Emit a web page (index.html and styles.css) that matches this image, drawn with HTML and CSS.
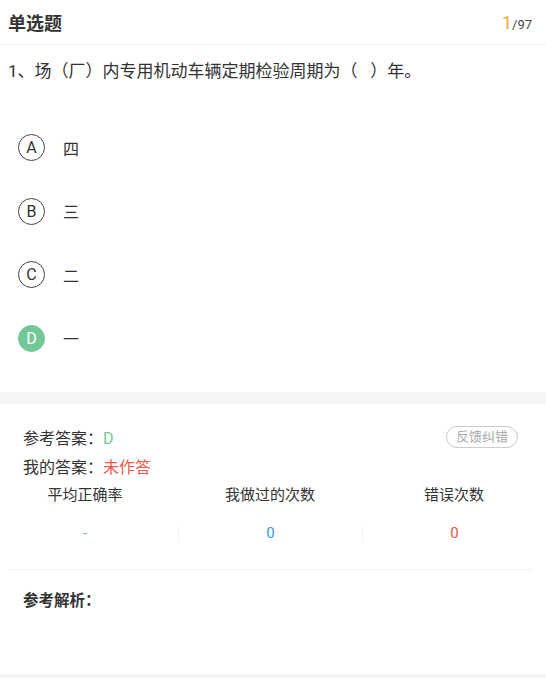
FILE: index.html
```html
<!DOCTYPE html>
<html>
<head>
  <title>单选题</title>
  <meta name="viewport" content="width=device-width, initial-scale=1.0">
  <link rel="stylesheet" href="styles.css">
</head>
<body>
  <div class='topbar'>
    <span class='topbar-title'>单选题</span>
    <span class='counter'><b>1</b>/97</span>
  </div>
  <div class='question'>1、场（厂）内专用机动车辆定期检验周期为（&nbsp;&nbsp;&nbsp;）年。</div>
  <ul class='options'>
    <li><span class='letter'>A</span><span>四</span></li>
    <li><span class='letter'>B</span><span>三</span></li>
    <li><span class='letter'>C</span><span>二</span></li>
    <li class='right'><span class='letter'>D</span><span>一</span></li>
  </ul>
  <div class='band'></div>
  <div class='answer'>
    <div class='answer-row'>
      <span>参考答案：<em class='ok'>D</em></span>
      <span class='feedback'>反馈纠错</span>
    </div>
    <div class='answer-row'>
      <span>我的答案：<em class='bad'>未作答</em></span>
    </div>
  </div>
  <div class='stats'>
    <div class='stat first'>
      <div class='stat-label'>平均正确率</div>
      <div class='stat-value teal'>-</div>
    </div>
    <div class='stat'>
      <div class='stat-label'>我做过的次数</div>
      <div class='stat-value blue'>0</div>
    </div>
    <div class='stat'>
      <div class='stat-label'>错误次数</div>
      <div class='stat-value red'>0</div>
    </div>
  </div>
  <div class='analysis'>参考解析：</div>
  <div class='band bottom'></div>
</body>
</html>
```

FILE: styles.css
```css
body {
  margin: 0;
  padding: 0;
  font-family: Roboto, "Noto Sans CJK SC", sans-serif;
  color: #333;
  background: #fff;
}
.topbar {
  display: flex;
  justify-content: space-between;
  align-items: center;
  height: 44px;
  padding: 0 14px 0 8px;
  border-bottom: 1px solid #f0f0f0;
}
.topbar-title {
  font-size: 18px;
  font-weight: bold;
}
.counter {
  font-size: 13px;
  color: #444;
}
.counter b {
  font-size: 18px;
  font-weight: normal;
  color: #f3a73b;
}
.question {
  font-size: 17px;
  line-height: 26px;
  padding: 13px 8px 0;
}
.options {
  list-style: none;
  margin: 32px 0 0;
  padding: 0 0 22px;
}
.options li {
  display: flex;
  align-items: center;
  height: 63.5px;
  padding-left: 18px;
  font-size: 16px;
}
.letter {
  display: flex;
  justify-content: center;
  align-items: center;
  width: 25px;
  height: 25px;
  border: 1px solid #444;
  border-radius: 50%;
  margin-right: 18px;
  font-size: 16px;
}
.right .letter {
  background: #72c997;
  border-color: #72c997;
  color: #fff;
}
.band {
  height: 12px;
  background: #f5f5f5;
}
.band.bottom {
  height: 4px;
  margin-top: 63px;
}
.answer {
  padding: 18px 28px 0 23px;
  font-size: 16px;
}
.answer-row {
  display: flex;
  justify-content: space-between;
  align-items: center;
  height: 29px;
}
.answer em {
  font-style: normal;
}
.ok { color: #72c997; }
.bad { color: #e8594b; }
.feedback {
  font-size: 13px;
  color: #aaa;
  border: 1px solid #ccc;
  border-radius: 11px;
  padding: 1px 9px;
  line-height: 18px;
}
.stats {
  display: grid;
  grid-template-columns: 178px 184px 184px;
  margin-top: 5px;
}
.stat {
  text-align: center;
  font-size: 15px;
}
.stat.first .stat-label,
.stat.first .stat-value {
  padding-right: 8px;
}
.stat-label {
  line-height: 20px;
}
.stat-value {
  margin-top: 20px;
  line-height: 16px;
  border-left: 1px solid #f2f2f2;
}
.stat.first .stat-value {
  border-left: 0;
}
.teal { color: #5ec3ac; }
.blue { color: #3b9bd6; }
.red { color: #dc5a4b; }
.analysis {
  margin: 28px 14px 0 8px;
  padding: 21px 15px 0;
  border-top: 1px solid #f0f0f0;
  font-size: 15.5px;
  font-weight: bold;
  line-height: 20px;
}
```
